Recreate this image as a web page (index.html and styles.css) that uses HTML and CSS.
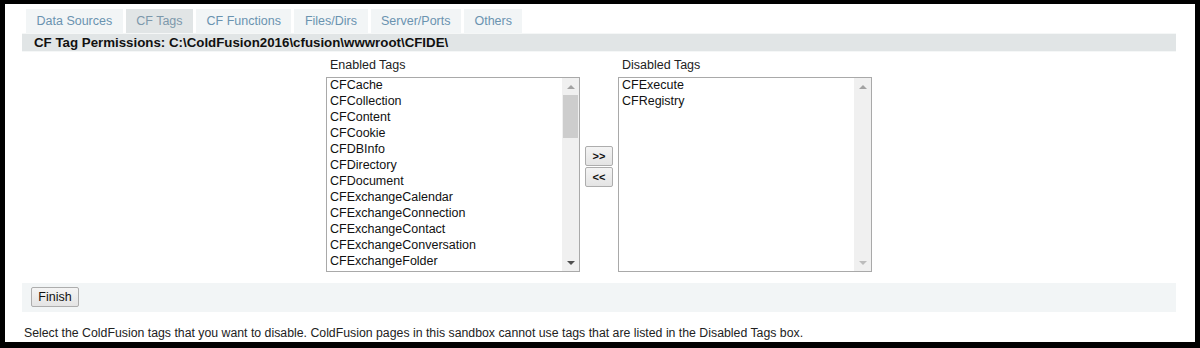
FILE: index.html
```html
<!DOCTYPE html>
<html lang="en">
<head>
  <meta charset="UTF-8" />
  <title>CF Tag Permissions</title>
  <link rel="stylesheet" href="styles.css">
</head>
<body>

  <div class="frame">

    <div class="tabs">
      <div class="tab">Data Sources</div>
      <div class="tab ativo">CF Tags</div>
      <div class="tab">CF Functions</div>
      <div class="tab">Files/Dirs</div>
      <div class="tab">Server/Ports</div>
      <div class="tab">Others</div>
    </div>

    <div class="titulo">CF Tag Permissions: C:\ColdFusion2016\cfusion\wwwroot\CFIDE\</div>

    <div class="seletor">
      <div class="coluna">
        <div class="rotulo">Enabled Tags</div>
        <div class="lista">
          <ul class="itens">
            <li>CFCache</li>
            <li>CFCollection</li>
            <li>CFContent</li>
            <li>CFCookie</li>
            <li>CFDBInfo</li>
            <li>CFDirectory</li>
            <li>CFDocument</li>
            <li>CFExchangeCalendar</li>
            <li>CFExchangeConnection</li>
            <li>CFExchangeContact</li>
            <li>CFExchangeConversation</li>
            <li>CFExchangeFolder</li>
          </ul>
          <div class="rolagem">
            <span class="seta cima"></span>
            <div class="trilho"><div class="polegar"></div></div>
            <span class="seta baixo escura"></span>
          </div>
        </div>
      </div>

      <div class="mover">
        <button class="botao-seta">&gt;&gt;</button>
        <button class="botao-seta">&lt;&lt;</button>
      </div>

      <div class="coluna">
        <div class="rotulo">Disabled Tags</div>
        <div class="lista">
          <ul class="itens">
            <li>CFExecute</li>
            <li>CFRegistry</li>
          </ul>
          <div class="rolagem">
            <span class="seta cima"></span>
            <div class="trilho"></div>
            <span class="seta baixo"></span>
          </div>
        </div>
      </div>
    </div>

    <div class="acoes">
      <button class="botao">Finish</button>
    </div>

    <p class="nota">Select the ColdFusion tags that you want to disable. ColdFusion pages in this sandbox cannot use tags that are listed in the Disabled Tags box.</p>

  </div>

</body>
</html>
```

FILE: styles.css
```css
html, body {
  margin: 0;
  background: #000;
}

body {
  padding: 4px 5px 6px 5px;
  font-family: 'Liberation Sans', Arial, sans-serif;
  font-size: 12.5px;
  color: #222;
}

.frame {
  background: #fff;
  height: 338px;
  overflow: hidden;
}

/* abas */
.tabs {
  display: flex;
  gap: 3px;
  padding: 5px 0 0 21px;
}

.tab {
  background: #f2f5f6;
  color: #6a93b0;
  height: 24px;
  line-height: 24px;
  padding: 0 10.5px;
}

.tab.ativo {
  background: #e1e5e6;
  color: #7d98ab;
}

.titulo {
  background: #e1e5e6;
  margin: 0 19px 0 17px;
  height: 19px;
  line-height: 18px;
  padding-left: 12px;
  font-size: 13.3px;
  font-weight: bold;
  color: #111;
  border-top: 1px solid #f5f7f7;
  border-bottom: 1px solid #f5f7f7;
  box-sizing: border-box;
}

/* seletor de tags */
.seletor {
  display: flex;
  justify-content: center;
  align-items: center;
  gap: 5px;
  margin: 5px 19px 0 17px;
}

.coluna {
  display: flex;
  flex-direction: column;
}

.rotulo {
  line-height: 16px;
  padding-left: 4px;
  margin-bottom: 4px;
}

.lista {
  display: flex;
  width: 252px;
  height: 193px;
  border: 1px solid #a9a9a9;
  background: #fff;
}

.itens {
  flex: 1;
  list-style: none;
  margin: 0;
  padding: 0 0 0 3px;
  overflow: hidden;
}

.itens li {
  height: 16px;
  line-height: 14px;
  white-space: nowrap;
  color: #111;
}

.rolagem {
  width: 17px;
  background: #f0f0f0;
  display: flex;
  flex-direction: column;
  align-items: center;
}

.seta {
  height: 17px;
  width: 17px;
  display: flex;
  align-items: center;
  justify-content: center;
}

.seta::before {
  content: "";
  border-left: 4px solid transparent;
  border-right: 4px solid transparent;
}

.seta.cima::before {
  border-bottom: 4px solid #a3a3a3;
}

.seta.baixo::before {
  border-top: 4px solid #bcbcbc;
}

.seta.baixo.escura::before {
  border-top-color: #505050;
}

.trilho {
  flex: 1;
  width: 15px;
}

.polegar {
  height: 43px;
  background: #cdcdcd;
}

.mover {
  display: flex;
  flex-direction: column;
  gap: 1px;
  margin-top: 4px;
}

.botao-seta,
.botao {
  font-family: 'Liberation Sans', Arial, sans-serif;
  color: #111;
  background: linear-gradient(#f4f4f4, #e4e4e4);
  border: 1px solid #adadad;
  border-radius: 2px;
  padding: 0;
}

.botao-seta {
  width: 28px;
  height: 20px;
  font-size: 11px;
  font-weight: bold;
}

/* rodape */
.acoes {
  background: #f2f5f6;
  margin: 11px 19px 0 17px;
  height: 29px;
  padding: 4px 0 0 9px;
  box-sizing: border-box;
}

.botao {
  font-size: 12.5px;
  width: 48px;
  height: 20px;
}

.nota {
  margin: 13px 0 0 19px;
  line-height: 16px;
  font-size: 12.3px;
  color: #222;
}
```
